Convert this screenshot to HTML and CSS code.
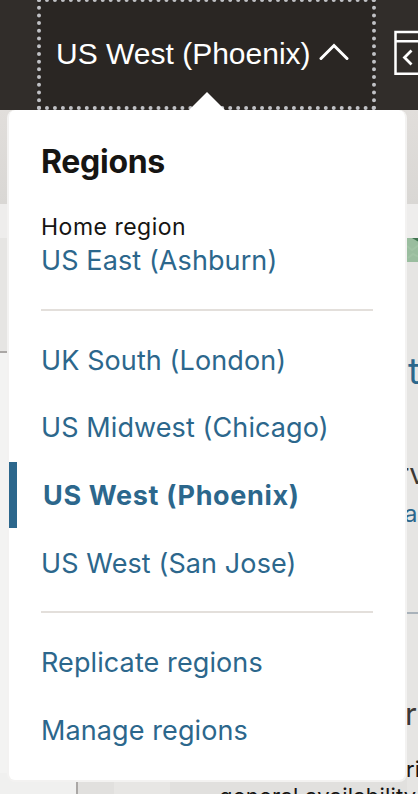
FILE: index.html
```
<!DOCTYPE html>
<html lang="en">
<head>
<meta charset="utf-8">
<title>Regions</title>
<link rel="stylesheet" href="styles.css">
</head>
<body>
<header class="topbar">
  <button class="region-button">
    <span class="region-label">US West (Phoenix)</span>
    <svg class="chevron" width="30" height="18" viewBox="0 0 30 18"><path d="M2 15.5 15 2.5 28 15.5" fill="none" stroke="#fff" stroke-width="3" stroke-linecap="round"/></svg>
    <span class="pointer"></span>
  </button>
  <svg class="console-icon" width="24" height="46" viewBox="0 0 24 46"><path d="M40 2H1.500V43.800H40M1.500 11.300H40" fill="none" stroke="#fff" stroke-width="2.500"/><path d="M17.500 20.500 10.500 27.500 17.500 34.500" fill="none" stroke="#fff" stroke-width="2.800"/></svg>
</header>
<main class="page">
  <div class="hero"></div>
  <div class="strip"></div>
  <div class="columns">
    <div class="left">
      <div class="left-panel"></div>
      <div class="left-blank"></div>
      <div class="news"><div class="thumb"></div><span class="news-text">general availability</span></div>
    </div>
    <div class="right">
      <div class="photo"><svg width="12" height="24" viewBox="0 0 12 24"><path d="M0 0H12V24H0Z" fill="#9abd9f"/><path d="M5 0H12V4Z" fill="#3f7350"/><path d="M0 8 5 12 12 7M1 20 6 16 12 19" fill="none" stroke="#a1c3a5" stroke-width="2"/></svg></div>
      <span class="frag frag-title">t</span>
      <span class="frag frag-service"><span>rv</span></span>
      <span class="frag frag-link">a</span>
      <div class="divider"></div>
      <span class="frag frag-heading">r</span>
      <span class="frag frag-body">ri</span>
    </div>
  </div>
</main>
<nav class="menu">
  <h2>Regions</h2>
  <div class="home">Home region</div>
  <a class="item home-link">US East (Ashburn)</a>
  <hr>
  <a class="item upper">UK South (London)</a>
  <a class="item upper">US Midwest (Chicago)</a>
  <a class="item selected">US West (Phoenix)</a>
  <a class="item last">US West (San Jose)</a>
  <hr class="second">
  <a class="item">Replicate regions</a>
  <a class="item">Manage regions</a>
</nav>
</body>
</html>
```
FILE: styles.css
```
* { box-sizing: border-box; }
body { margin: 0; width: 418px; height: 794px; overflow: hidden; position: relative; font-family: Inter, "Liberation Sans", sans-serif; background: #f3f3f2; }
.topbar { height: 110px; background: #312d2a; display: flex; align-items: flex-start; overflow: hidden; }
.region-button { position: relative; flex: none; width: 339px; height: 112px; margin: -2px 0 0 37px; padding: 0 0 0 15px; border: 4px dotted #c0c1c5; background: #2a2623; display: flex; align-items: center; color: #fff; font: 30px/36px "Liberation Sans", Arial, sans-serif; }
.region-label { white-space: nowrap; }
.chevron { flex: none; margin: -4px 0 0 8px; }
.pointer { position: absolute; left: 148px; bottom: -4px; width: 36px; height: 18px; background: #fff; clip-path: polygon(50% 0, 100% 100%, 0 100%); }
.console-icon { flex: none; margin: 30px 0 0 18px; }
.page { height: 684px; display: flex; flex-direction: column; }
.hero { height: 94px; flex: none; background: linear-gradient(#e1dedb, #d9d7d4); }
.strip { height: 34px; flex: none; background: #eeedec; }
.columns { display: flex; height: 556px; background: #e6e5e3; }
.left { width: 407px; display: flex; flex-direction: column; }
.left-panel { height: 115px; border-bottom: 2px solid #aaa7a5; background: #e6e5e3; }
.left-blank { height: 420px; background: #f3f3f2; }
.news { height: 21px; padding-left: 38px; border-left: 76px solid #f0f0ef; background: #e1e0de; box-shadow: inset 2px 0 #aaa7a5; display: flex; }
.thumb { flex: none; width: 56px; background: #e7e6e4; }
.news-text { margin: 11px 0 0 49px; font-size: 22px; line-height: 24px; letter-spacing: .2px; color: #161513; white-space: nowrap; }
.right { width: 11px; display: flex; flex-direction: column; }
.photo { height: 24px; flex: none; }
.photo svg { display: block; }
.frag { display: block; flex: none; white-space: nowrap; color: #3b3835; }
.frag-title { margin: 89px 0 0 1px; height: 40px; font-size: 36px; line-height: 40px; color: #2c678c; }
.frag-service { margin-top: 64px; height: 38px; font-size: 29px; line-height: 38px; }
.frag-service span { margin-left: -9px; }
.frag-link { margin: 6px 0 0 -3px; height: 30px; font-size: 24px; line-height: 30px; color: #2c678c; }
.divider { margin-top: 83px; height: 2px; flex: none; background: #a9b2ba; }
.frag-heading { margin: 80px 0 0 -2px; height: 40px; font-size: 31px; line-height: 40px; }
.frag-body { margin: 20px 0 0 -1px; height: 30px; font-size: 22px; line-height: 30px; color: #161513; }
.menu { position: absolute; left: 7px; top: 110px; width: 400px; height: 672px; border: solid #f3f2f1; border-width: 0 2px 2px; border-radius: 8px; background: #fff; color: #161513; padding: 32px 32px 0; }
h2 { margin: 0; font-size: 32px; line-height: 40px; font-weight: 700; letter-spacing: -.3px; }
.home { margin-top: 30px; height: 30px; font-size: 23px; line-height: 30px; letter-spacing: .5px; }
.item { display: flex; align-items: center; height: 68px; font-size: 27px; color: #2c678c; white-space: nowrap; letter-spacing: .1px; }
.home-link { height: 36px; }
.upper { height: 67px; }
.last { height: 70px; }
hr { margin: 31px 0 16px; border: 0; height: 2px; background: #e3dfdb; }
hr.second { margin: 13px 0 15px; }
.selected { height: 66px; margin: 1px -32px 0; padding-left: 26px; border-left: 8px solid #2c678c; font-weight: 700; letter-spacing: .65px; }
```
